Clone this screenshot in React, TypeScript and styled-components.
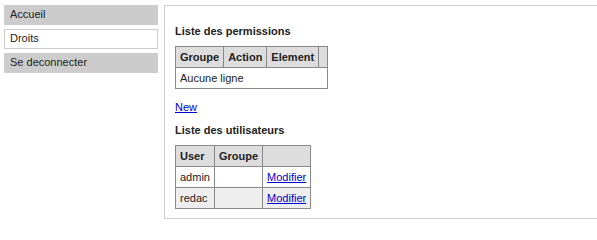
import React from "react";
import styled, { createGlobalStyle } from "styled-components";

const GlobalStyle = createGlobalStyle`
  html, body {
    margin: 0;
    padding: 0;
    background: #fff;
    overflow: hidden;
  }
  body {
    font-family: "Liberation Sans", Arial, sans-serif;
    font-size: 11px;
    color: #222;
  }
`;

const Page = styled.div`
  display: flex;
  align-items: flex-start;
  gap: 6px;
  padding: 5px 0 0 4px;
  width: 620px;
`;

const Menu = styled.nav`
  display: flex;
  flex-direction: column;
  gap: 4px;
  width: 154px;
  flex-shrink: 0;
`;

const MenuItem = styled.div<{ $active?: boolean }>`
  box-sizing: border-box;
  height: 20px;
  line-height: 13px;
  padding: ${(p) => (p.$active ? "2px 5px" : "3px 6px")};
  background: ${(p) => (p.$active ? "#fff" : "#ccc")};
  border: ${(p) => (p.$active ? "1px solid #ccc" : "none")};
`;

const Panel = styled.main`
  box-sizing: border-box;
  flex: 1;
  height: 214px;
  border: 1px solid #ccc;
  padding: 19px 10px 10px;
`;

const Title = styled.div`
  font-weight: bold;
  line-height: 13px;
  margin: 0 0 8px;
`;

const Table = styled.table`
  border-collapse: collapse;
  line-height: 13px;
  margin-bottom: 12px;

  th,
  td {
    border: 1px solid #888;
    padding: 4px 4px 3px;
    text-align: left;
    white-space: nowrap;
  }

  th {
    background: #ddd;
    font-weight: bold;
  }
`;

const Row = styled.tr<{ $alt?: boolean }>`
  background: ${(p) => (p.$alt ? "#eee" : "#fff")};
`;

const Link = styled.a`
  color: #0000cc;
  text-decoration: underline;
`;

const NewLink = styled.div`
  line-height: 13px;
  margin-bottom: 10px;
`;

const users = ["admin", "redac"];

export default function App() {
  return (
    <>
      <GlobalStyle />
      <Page>
        <Menu>
          <MenuItem>Accueil</MenuItem>
          <MenuItem $active>Droits</MenuItem>
          <MenuItem>Se deconnecter</MenuItem>
        </Menu>
        <Panel>
          <Title>Liste des permissions</Title>
          <Table>
            <thead>
              <tr>
                <th>Groupe</th>
                <th>Action</th>
                <th>Element</th>
                <th></th>
              </tr>
            </thead>
            <tbody>
              <Row>
                <td colSpan={4}>Aucune ligne</td>
              </Row>
            </tbody>
          </Table>
          <NewLink>
            <Link href="#">New</Link>
          </NewLink>
          <Title>Liste des utilisateurs</Title>
          <Table>
            <thead>
              <tr>
                <th>User</th>
                <th>Groupe</th>
                <th></th>
              </tr>
            </thead>
            <tbody>
              {users.map((u, i) => (
                <Row key={u} $alt={i % 2 === 1}>
                  <td>{u}</td>
                  <td></td>
                  <td>
                    <Link href="#">Modifier</Link>
                  </td>
                </Row>
              ))}
            </tbody>
          </Table>
        </Panel>
      </Page>
    </>
  );
}
